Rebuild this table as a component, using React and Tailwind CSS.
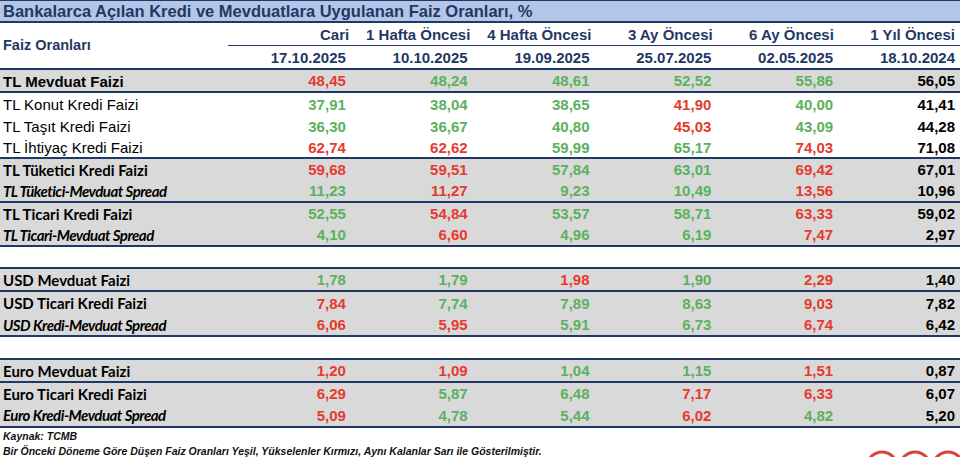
import React from 'react';

const NAVY = 'border-[#1f3864]';
const arial = { fontFamily: '"Liberation Sans", Arial, sans-serif' };
const cal = { fontFamily: 'Lato, "Open Sans", sans-serif' };

const cols = [
  { label: 'Cari', date: '17.10.2025' },
  { label: '1 Hafta Öncesi', date: '10.10.2025' },
  { label: '4 Hafta Öncesi', date: '19.09.2025' },
  { label: '3 Ay Öncesi', date: '25.07.2025' },
  { label: '6 Ay Öncesi', date: '02.05.2025' },
  { label: '1 Yıl Öncesi', date: '18.10.2024' },
];

// g = düşen (yeşil), r = yükselen (kırmızı), son sütun siyah
const r = (name, kind, vals) => ({ name, kind, vals });

const sections = [
  { gray: true, rows: [r('TL Mevduat Faizi', 'ab', 'r48,45 g48,24 g48,61 g52,52 g55,86 k56,05')], h: [21] },
  {
    gray: false,
    h: [22, 22, 20],
    rows: [
      r('TL Konut Kredi Faizi', 'a', 'g37,91 g38,04 g38,65 r41,90 g40,00 k41,41'),
      r('TL Taşıt Kredi Faizi', 'a', 'g36,30 g36,67 g40,80 r45,03 g43,09 k44,28'),
      r('TL İhtiyaç Kredi Faizi', 'a', 'r62,74 r62,62 g59,99 g65,17 r74,03 k71,08'),
    ],
  },
  {
    gray: true,
    h: [21, 21],
    rows: [
      r('TL Tüketici Kredi Faizi', 'c', 'r59,68 r59,51 g57,84 g63,01 r69,42 k67,01'),
      r('TL Tüketici-Mevduat Spread', 'ci', 'g11,23 r11,27 g9,23 g10,49 r13,56 k10,96'),
    ],
  },
  {
    gray: true,
    h: [21, 21],
    rows: [
      r('TL Ticari Kredi Faizi', 'c', 'g52,55 r54,84 g53,57 g58,71 r63,33 k59,02'),
      r('TL Ticari-Mevduat Spread', 'ci', 'g4,10 r6,60 g4,96 g6,19 r7,47 k2,97'),
    ],
  },
  { spacer: 22 },
  { gray: true, h: [21], rows: [r('USD Mevduat Faizi', 'c', 'g1,78 g1,79 r1,98 g1,90 r2,29 k1,40')] },
  {
    gray: true,
    h: [22, 21],
    rows: [
      r('USD Ticari Kredi Faizi', 'c', 'r7,84 g7,74 g7,89 g8,63 r9,03 k7,82'),
      r('USD Kredi-Mevduat Spread', 'ci', 'r6,06 r5,95 g5,91 g6,73 r6,74 k6,42'),
    ],
  },
  { spacer: 23 },
  { gray: true, h: [21], rows: [r('Euro Mevduat Faizi', 'c', 'r1,20 r1,09 g1,04 g1,15 r1,51 k0,87')] },
  {
    gray: true,
    h: [21, 22],
    rows: [
      r('Euro Ticari Kredi Faizi', 'c', 'r6,29 g5,87 g6,48 r7,17 r6,33 k6,07'),
      r('Euro Kredi-Mevduat Spread', 'ci', 'r5,09 g4,78 g5,44 r6,02 g4,82 k5,20'),
    ],
  },
];

const colorOf = { r: 'text-[#e53a2f]', g: 'text-[#5bb15e]', k: 'text-black' };

function Label({ name, kind }) {
  if (kind === 'a') return <span style={arial} className="text-[15px] text-black">{name}</span>;
  if (kind === 'ab') return <span style={arial} className="text-[15px] font-bold text-black">{name}</span>;
  if (kind === 'ci')
    return (
      <span style={cal} className="text-[15px] font-bold italic tracking-[-0.5px] text-black">
        {name}
      </span>
    );
  return <span style={cal} className="text-[15px] font-bold text-black">{name}</span>;
}

function Row({ row, h }) {
  return (
    <div
      className="grid grid-cols-[221px_repeat(6,1fr)] items-center pl-[3px] pr-[5px] leading-none"
      style={{ height: h }}
    >
      <div className="whitespace-nowrap">
        <Label name={row.name} kind={row.kind} />
      </div>
      {row.vals.split(' ').map((v, i) => (
        <div key={i} style={arial} className={`text-right text-[15px] font-bold ${colorOf[v[0]]}`}>
          {v.slice(1)}
        </div>
      ))}
    </div>
  );
}

export default function App() {
  return (
    <div className="relative w-[960px] h-[457px] overflow-hidden bg-white">
      {/* başlık */}
      <div className={`h-[23px] border-t border-b-2 ${NAVY} bg-[#b4c6e7] flex items-center pl-[3px]`}>
        <span style={arial} className="text-[16.5px] font-bold text-[#1f3864] leading-none whitespace-nowrap">
          Bankalarca Açılan Kredi ve Mevduatlara Uygulanan Faiz Oranları, %
        </span>
      </div>

      {/* sütun başlıkları */}
      <div className={`flex h-[47px] border-b-2 ${NAVY}`}>
        <div className="w-[224px] flex items-center pl-[3px]">
          <span style={arial} className="text-[14.5px] font-bold text-[#1f3864]">Faiz Oranları</span>
        </div>
        <div className="flex-1 flex flex-col" style={arial}>
          <div className={`ml-1 h-[23px] border-b ${NAVY} grid grid-cols-6 items-center pr-[5px]`}>
            {cols.map((c) => (
              <div key={c.label} className="text-right text-[15px] font-bold text-[#1f3864] leading-none">
                {c.label}
              </div>
            ))}
          </div>
          <div className="h-[22px] grid grid-cols-6 items-center pr-[5px]">
            {cols.map((c) => (
              <div key={c.date} className="text-right text-[15px] font-bold text-[#1f3864] leading-none">
                {c.date}
              </div>
            ))}
          </div>
        </div>
      </div>

      {sections.map((s, i) =>
        s.spacer ? (
          <div key={i} className={`border-b-2 ${NAVY}`} style={{ height: s.spacer }} />
        ) : (
          <div key={i} className={`border-b-2 ${NAVY} ${s.gray ? 'bg-[#d9d9d9]' : 'bg-white'}`}>
            {s.rows.map((row, j) => (
              <Row key={row.name} row={row} h={s.h[j]} />
            ))}
          </div>
        )
      )}

      {/* dipnot */}
      <div style={arial} className="pl-[3px] pt-[1px] text-[10.5px] font-bold italic text-[#111] leading-[15px]">
        <div>Kaynak: TCMB</div>
        <div className="whitespace-nowrap">
          Bir Önceki Döneme Göre Düşen Faiz Oranları Yeşil, Yükselenler Kırmızı, Aynı Kalanlar Sarı ile
          Gösterilmiştir.
        </div>
      </div>

      {/* logo halkaları */}
      <svg className="absolute left-[864px] top-[449px]" width="100" height="40" viewBox="0 0 100 40">
        <circle cx="18" cy="18" r="15" fill="none" stroke="#d8433c" strokeWidth="3" />
        <circle cx="51" cy="18" r="15" fill="none" stroke="#d8433c" strokeWidth="3" />
        <circle cx="84" cy="18" r="15" fill="none" stroke="#d8433c" strokeWidth="3" />
      </svg>
    </div>
  );
}
